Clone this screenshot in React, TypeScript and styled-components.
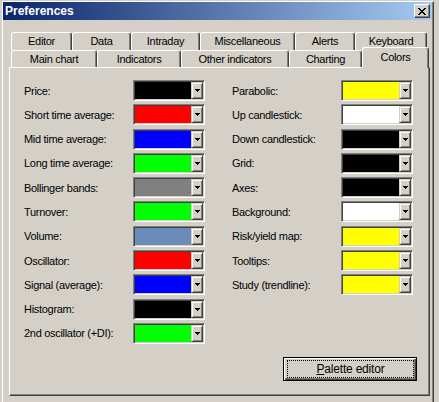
import React from "react";
import styled, { createGlobalStyle } from "styled-components";

const GlobalStyle = createGlobalStyle`
  html, body {
    margin: 0;
    padding: 0;
    background: #d4d0c8;
    overflow: hidden;
  }
  body {
    font-family: "Liberation Sans", Arial, sans-serif;
    font-size: 11px;
    letter-spacing: -0.3px;
    color: #000;
  }
`;

const Window = styled.div`
  margin: 1px 0 0 2px;
  width: 430px;
  height: 420px;
  border-top: 1px solid #fff;
  border-left: 1px solid #fff;
  border-right: 1px solid #404040;
  box-shadow: inset -1px 0 #808080;
  display: flex;
  flex-direction: column;
`;

const TitleBar = styled.div`
  height: 18px;
  margin-right: 1px;
  padding: 0 2px;
  background: linear-gradient(to right, #0a246a, #a6caf0);
  display: flex;
  align-items: center;
  justify-content: space-between;
`;

const Title = styled.span`
  color: #fff;
  font-weight: bold;
  font-size: 12px;
  letter-spacing: 0;
`;

const CloseButton = styled.div`
  width: 16px;
  height: 14px;
  box-sizing: border-box;
  background: #d4d0c8;
  border: 1px solid;
  border-color: #fff #404040 #404040 #fff;
  box-shadow: inset -1px -1px #808080;
  display: flex;
  align-items: center;
  justify-content: center;
`;

const Client = styled.div`
  padding: 12px 0 0 6px;
  display: flex;
  flex-direction: column;
`;

const TabRow = styled.div`
  display: flex;
  padding-left: 2px;
  align-items: flex-end;
`;

const Tab = styled.div<{ $w: number; $h: number; $active?: boolean }>`
  position: relative;
  width: ${(p) => p.$w}px;
  height: ${(p) => (p.$active ? p.$h + 4 : p.$h)}px;
  margin-top: ${(p) => (p.$active ? -3 : 0)}px;
  margin-bottom: ${(p) => (p.$active ? -1 : 0)}px;
  z-index: ${(p) => (p.$active ? 2 : 0)};
  box-sizing: border-box;
  background: #d4d0c8;
  border: 1px solid #fff;
  border-bottom: none;
  border-right-color: #404040;
  border-radius: 3px 3px 0 0;
  box-shadow: inset -1px 0 #808080;
  display: flex;
  align-items: center;
  justify-content: center;
  padding-bottom: ${(p) => (p.$active ? 3 : 1)}px;
`;

const Panel = styled.div`
  position: relative;
  z-index: 1;
  width: 421px;
  height: 329px;
  box-sizing: border-box;
  border: 1px solid;
  border-color: #fff #404040 #404040 #fff;
  box-shadow: inset -1px -1px #808080;
  padding: 12px 0 0 14px;
  display: flex;
  flex-direction: column;
`;

const Columns = styled.div`
  display: grid;
  grid-template-columns: 208px 181px;
  align-items: start;
`;

const Column = styled.div`
  display: flex;
  flex-direction: column;
  gap: 3.3px;
`;

const Row = styled.div`
  display: flex;
  align-items: center;
  height: 21px;
`;

const Label = styled.span<{ $w: number }>`
  width: ${(p) => p.$w}px;
  white-space: nowrap;
`;

const Combo = styled.div<{ $w: number }>`
  width: ${(p) => p.$w}px;
  height: 21px;
  box-sizing: border-box;
  border: 1px solid;
  border-color: #808080 #fff #fff #808080;
  box-shadow: inset 1px 1px #404040, inset -1px -1px #d4d0c8;
  padding: 1px;
  display: flex;
`;

const Swatch = styled.div<{ $c: string }>`
  flex: 1;
  background: ${(p) => p.$c};
`;

const DropButton = styled.div`
  width: 12px;
  box-sizing: border-box;
  background: #d4d0c8;
  border: 1px solid;
  border-color: #d4d0c8 #404040 #404040 #d4d0c8;
  box-shadow: inset 1px 1px #fff, inset -1px -1px #808080;
  display: flex;
  align-items: center;
  justify-content: center;
`;

const PaletteButton = styled.button`
  align-self: flex-end;
  margin: 13px 12px 0 0;
  width: 134px;
  height: 24px;
  box-sizing: border-box;
  border: 1px solid #000;
  background: #d4d0c8;
  box-shadow: inset 1px 1px #fff, inset -1px -1px #404040,
    inset -2px -2px #808080;
  padding: 2px 2px 2px 3px;
  font: inherit;
  letter-spacing: inherit;
  color: #000;
  display: flex;
`;

const FocusRing = styled.span`
  flex: 1;
  border: 1px dotted #000;
  display: flex;
  align-items: center;
  justify-content: center;
  font-size: 12px;
  letter-spacing: -0.2px;
`;

const Arrow = () => (
  <svg width="5" height="3" viewBox="0 0 5 3" shapeRendering="crispEdges">
    <rect x="0" y="0" width="5" height="1" fill="#000" />
    <rect x="1" y="1" width="3" height="1" fill="#000" />
    <rect x="2" y="2" width="1" height="1" fill="#000" />
  </svg>
);

const CloseGlyph = () => (
  <svg width="8" height="7" viewBox="0 0 8 7" shapeRendering="crispEdges">
    <path d="M0 0h2v1h-2zM6 0h2v1h-2zM1 1h2v1h-2zM5 1h2v1h-2zM2 2h4v1h-4zM3 3h2v1h-2zM2 4h4v1h-4zM1 5h2v1h-2zM5 5h2v1h-2zM0 6h2v1h-2zM6 6h2v1h-2z" fill="#000" />
  </svg>
);

const backTabs: [string, number][] = [
  ["Editor", 61],
  ["Data", 59],
  ["Intraday", 69],
  ["Miscellaneous", 95],
  ["Alerts", 60],
  ["Keyboard", 72],
];

const frontTabs: [string, number][] = [
  ["Main chart", 86],
  ["Indicators", 84],
  ["Other indicators", 108],
  ["Charting", 73],
  ["Colors", 67],
];

const leftColors: [string, string][] = [
  ["Price:", "#000000"],
  ["Short time average:", "#ff0000"],
  ["Mid time average:", "#0000ff"],
  ["Long time average:", "#00ff00"],
  ["Bollinger bands:", "#808080"],
  ["Turnover:", "#00ff00"],
  ["Volume:", "#6b8cba"],
  ["Oscillator:", "#ff0000"],
  ["Signal (average):", "#0000ff"],
  ["Histogram:", "#000000"],
  ["2nd oscillator (+DI):", "#00ff00"],
];

const rightColors: [string, string][] = [
  ["Parabolic:", "#ffff00"],
  ["Up candlestick:", "#ffffff"],
  ["Down candlestick:", "#000000"],
  ["Grid:", "#000000"],
  ["Axes:", "#000000"],
  ["Background:", "#ffffff"],
  ["Risk/yield map:", "#ffff00"],
  ["Tooltips:", "#ffff00"],
  ["Study (trendline):", "#ffff00"],
];

const ColorRow = ({ label, color, labelW, comboW }: { label: string; color: string; labelW: number; comboW: number }) => (
  <Row>
    <Label $w={labelW}>{label}</Label>
    <Combo $w={comboW}>
      <Swatch $c={color} />
      <DropButton>
        <Arrow />
      </DropButton>
    </Combo>
  </Row>
);

export default function App() {
  return (
    <>
      <GlobalStyle />
      <Window>
        <TitleBar>
          <Title>Preferences</Title>
          <CloseButton>
            <CloseGlyph />
          </CloseButton>
        </TitleBar>
        <Client>
          <TabRow>
            {backTabs.map(([name, w]) => (
              <Tab key={name} $w={w} $h={18}>
                {name}
              </Tab>
            ))}
          </TabRow>
          <TabRow>
            {frontTabs.map(([name, w]) => (
              <Tab key={name} $w={w} $h={17} $active={name === "Colors"}>
                {name}
              </Tab>
            ))}
          </TabRow>
          <Panel>
            <Columns>
              <Column>
                {leftColors.map(([l, c]) => (
                  <ColorRow key={l} label={l} color={c} labelW={109} comboW={72} />
                ))}
              </Column>
              <Column>
                {rightColors.map(([l, c]) => (
                  <ColorRow key={l} label={l} color={c} labelW={110} comboW={73} />
                ))}
              </Column>
            </Columns>
            <PaletteButton>
              <FocusRing>
                <span>
                  <u>P</u>alette editor
                </span>
              </FocusRing>
            </PaletteButton>
          </Panel>
        </Client>
      </Window>
    </>
  );
}
